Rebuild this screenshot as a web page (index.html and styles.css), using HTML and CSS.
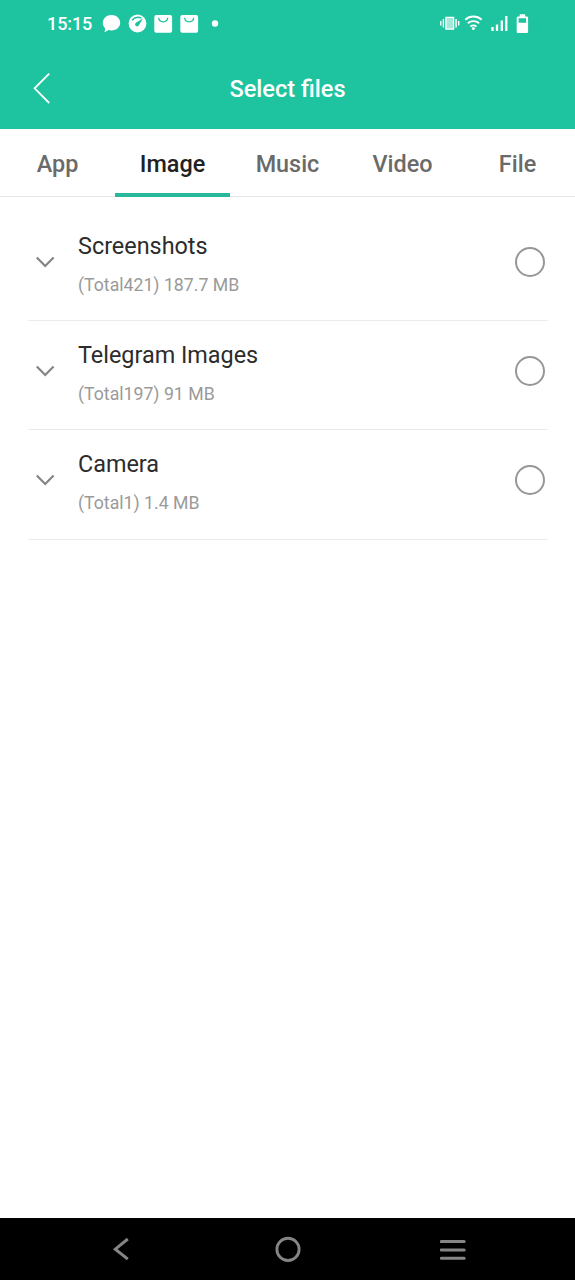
FILE: index.html
```html
<!DOCTYPE html>
<html lang="en">
<head>
<meta charset="utf-8">
<title>Select files</title>
<link rel="stylesheet" href="styles.css">
</head>
<body>
<div class="screen">
  <div class="status">
    <span class="clock">15:15</span>
    <svg class="notifications" width="118" height="24" viewBox="102 12 118 24">
      <path fill="#fff" d="M111.500 15c5 0 8.700 3.400 8.700 7.800s-3.700 7.700-8.700 7.700c-1.200 0-2.200-.2-3.200-.5-1.200.9-2.600 1.800-4 2 .6-1 .9-2.300.7-3.700-1.400-1.400-2.200-3.300-2.200-5.500 0-4.400 3.700-7.800 8.700-7.800z"/>
      <circle cx="137.500" cy="23.500" r="8.900" fill="#fff"/>
      <path d="M132 20.300c2.400-2.900 6.300-3.600 9.300-2.300" fill="none" stroke="#1ec39f" stroke-width="1.400"/>
      <path d="M143 18.500l-4.300 7.100a2 2 0 1 1-2.800-2.800z" fill="#1ec39f"/>
      <rect x="154.300" y="15" width="17.800" height="17.800" rx="2" fill="#fff"/>
      <path d="M158.700 17.800c.4 5.400 8.600 5.400 9 0" fill="none" stroke="#1ec39f" stroke-width="1.300"/>
      <rect x="180.300" y="15" width="17.800" height="17.800" rx="2" fill="#fff"/>
      <path d="M184.700 17.800c.4 5.400 8.600 5.400 9 0" fill="none" stroke="#1ec39f" stroke-width="1.300"/>
      <circle cx="215" cy="23.500" r="3.200" fill="#fff"/>
    </svg>
    <svg class="system" width="90" height="24" viewBox="440 12 90 24">
      <rect x="445.900" y="17.400" width="7.700" height="11.700" fill="#fff" fill-opacity=".6" stroke="#fff" stroke-width="1.300"/>
      <path d="M443.400 19v8.500M440.800 21v4.500M456.100 19v8.500M458.700 21v4.500" stroke="#fff" stroke-width="1.400"/>
      <g fill="none" stroke="#fff" stroke-width="1.900">
        <path d="M465.200 19.700c4.700-4.200 11.800-4.200 16.500 0"/>
        <path d="M467.800 23.300c3.200-2.900 8.100-2.900 11.300 0"/>
        <path d="M470.400 26.600c1.700-1.500 4.400-1.500 6.100 0"/>
      </g>
      <circle cx="473.400" cy="28.600" r="1.500" fill="#fff"/>
      <path d="M492.500 27v4M497 24.500V31M501.800 20.500V31M506.300 16v15" stroke="#fff" stroke-width="2.300"/>
      <path fill="#fff" fill-rule="evenodd" d="M519.700 14.200h5.400v2.200h1.700q1.300 0 1.300 1.300v14q0 1.300-1.300 1.300h-8.800q-1.300 0-1.300-1.300v-14q0-1.300 1.300-1.300h1.700zM518.600 18.200v4.500h7.500v-4.500z"/>
    </svg>
  </div>
  <header class="header">
    <svg class="back" width="20" height="34" viewBox="0 0 20 34"><path d="M17.200 1.700L2.600 16.300l14.600 14.700" fill="none" stroke="#fff" stroke-width="1.800"/></svg>
    <h1 class="title">Select files</h1>
  </header>
  <nav class="tabs">
    <div class="tab">App</div>
    <div class="tab tab-active">Image</div>
    <div class="tab">Music</div>
    <div class="tab">Video</div>
    <div class="tab">File</div>
  </nav>
  <main class="list">
    <div class="row">
      <svg class="chevron" width="20" height="14" viewBox="0 0 20 14"><path d="M1.800 2.400L10.200 11l8.400-8.600" fill="none" stroke="#858585" stroke-width="2.200"/></svg>
      <div class="info"><div class="name">Screenshots</div><div class="detail">(Total421) 187.7 MB</div></div>
      <span class="radio"></span>
    </div>
    <div class="row">
      <svg class="chevron" width="20" height="14" viewBox="0 0 20 14"><path d="M1.800 2.400L10.200 11l8.400-8.600" fill="none" stroke="#858585" stroke-width="2.200"/></svg>
      <div class="info"><div class="name">Telegram Images</div><div class="detail">(Total197) 91 MB</div></div>
      <span class="radio"></span>
    </div>
    <div class="row">
      <svg class="chevron" width="20" height="14" viewBox="0 0 20 14"><path d="M1.800 2.400L10.200 11l8.400-8.600" fill="none" stroke="#858585" stroke-width="2.200"/></svg>
      <div class="info"><div class="name">Camera</div><div class="detail">(Total1) 1.4 MB</div></div>
      <span class="radio"></span>
    </div>
  </main>
  <footer class="navbar">
    <svg width="18" height="26" viewBox="0 0 18 26"><path d="M15.800 3L3.300 13.200l12.500 9.900" fill="none" stroke="#858585" stroke-width="3"/></svg>
    <svg width="26" height="26" viewBox="0 0 26 26"><circle cx="13" cy="13.400" r="11.100" fill="none" stroke="#858585" stroke-width="2.900"/></svg>
    <svg class="nav-menu" width="26" height="26" viewBox="0 0 26 26"><path d="M1.200 5.600h23M1.200 13.900h23M1.200 22.200h23" fill="none" stroke="#858585" stroke-width="3" stroke-linecap="round"/></svg>
  </footer>
</div>
</body>
</html>
```
FILE: styles.css
```css
* { box-sizing: border-box; }
body { margin: 0; background: #fff; font-family: Roboto, sans-serif; }
svg { display: block; flex: none; }
.screen { width: 575px; height: 1280px; display: flex; flex-direction: column; }
.status {
  height: 48px;
  padding: 0 45px 0 47px;
  display: flex;
  align-items: center;
  background: #1ec39f;
  color: #fff;
}
.clock { width: 55px; font-size: 18px; font-weight: 500; letter-spacing: -0.1px; line-height: 24px; }
.system { margin-left: auto; }
.header {
  height: 81px;
  padding: 0 32px;
  display: grid;
  grid-template-columns: 20px 1fr 20px;
  align-items: center;
  background: #1ec39f;
}
.title { margin: 0; color: #fff; font-size: 23.6px; font-weight: 500; text-align: center; line-height: 32px; }
.tabs { height: 68px; display: grid; grid-template-columns: repeat(5, 1fr); border-bottom: 1px solid #e6e6e6; }
.tab {
  height: 68px;
  padding-top: 2px;
  border-bottom: 4px solid transparent;
  text-align: center;
  line-height: 66px;
  font-size: 23.4px;
  font-weight: 500;
  color: #6a6a6a;
}
.tab-active { color: #212121; border-bottom-color: #27b99a; }
.list { flex: 1; padding: 15px 27px 0 28px; }
.row { height: 109.2px; padding: 0 3px 9px 7px; display: flex; align-items: center; border-bottom: 1px solid #ebebeb; }
.info { flex: 1; margin: 3px 0 0 23px; }
.name { color: #2c2c2c; font-size: 23.4px; line-height: 36px; }
.detail { color: #9a9a9a; font-size: 17.7px; line-height: 26px; margin-top: 8px; }
.radio { width: 30px; height: 30px; border: 2px solid #979797; border-radius: 50%; }
.navbar {
  height: 62px;
  padding: 0 109px 0 112px;
  display: grid;
  grid-template-columns: 163px 26px 1fr;
  align-items: center;
  background: #000;
}
.nav-menu { justify-self: end; }
```
